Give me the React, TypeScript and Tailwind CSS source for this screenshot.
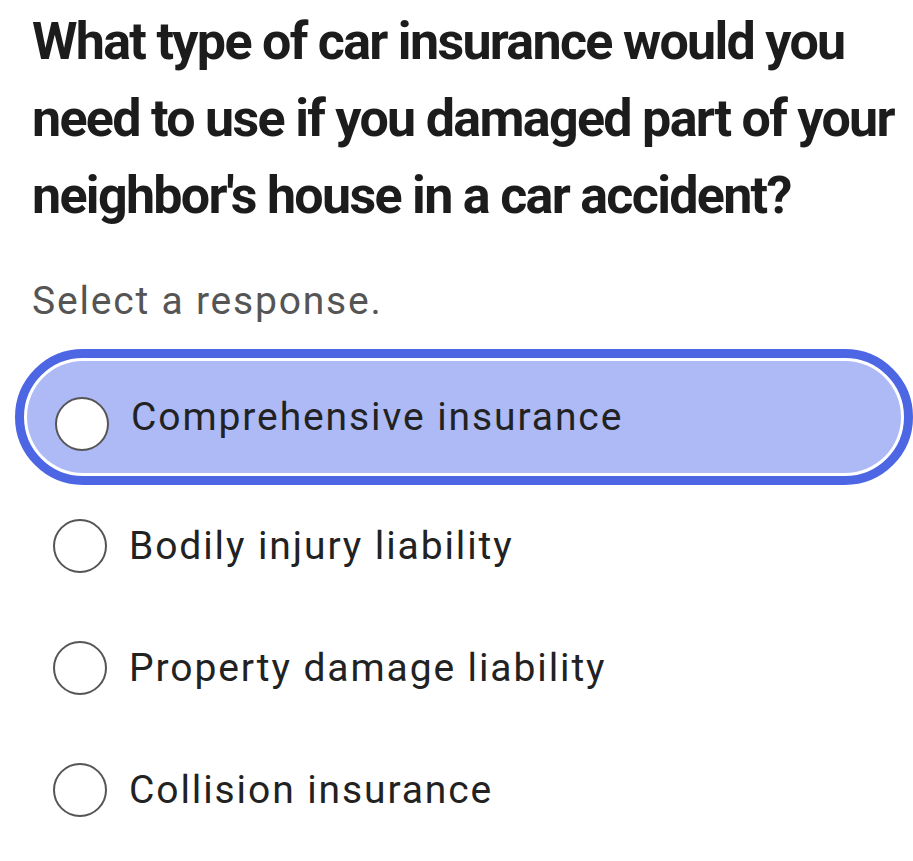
const options = [
  "Comprehensive insurance",
  "Bodily injury liability",
  "Property damage liability",
  "Collision insurance",
];

function Radio() {
  return (
    <span className="block w-[54px] h-[54px] shrink-0 rounded-full border-[2.5px] border-[#555] bg-white" />
  );
}

export default function App() {
  return (
    <div
      className="min-h-[861px] w-[913px] overflow-hidden bg-white text-[#1f1f1f]"
      style={{ fontFamily: "Roboto, 'Noto Sans', sans-serif" }}
    >
      <h1 className="px-[32px] pt-[3px] whitespace-nowrap text-[52px] font-bold leading-[77px] tracking-[-1.7px] text-[#1c1c1c]">
        What type of car insurance would you
        <br />
        need to use if you damaged part of your
        <br />
        neighbor's house in a car accident?
      </h1>
      <p className="px-[32px] mt-[43px] text-[39px] leading-[48px] tracking-[1.8px] text-[#555]">Select a response.</p>

      <div className="mt-[24px] flex flex-col">
        {options.map((opt, i) =>
          i === 0 ? (
            <div
              key={opt}
              className="ml-[15px] w-[898px] h-[136px] rounded-full border-[9px] border-[#4d66e3] p-[3px]"
            >
              <div className="flex h-full items-center gap-[22px] rounded-full bg-[#adbaf5] pl-[28px]">
                <div className="mt-[14px]">
                  <Radio />
                </div>
                <span className="text-[39px] leading-[48px] tracking-[1.9px] text-[#222]">{opt}</span>
              </div>
            </div>
          ) : (
            <div key={opt} className="flex h-[122px] items-center gap-[22px] pl-[53px]">
              <Radio />
              <span className="text-[39px] leading-[48px] tracking-[1.9px] text-[#222]">{opt}</span>
            </div>
          )
        )}
      </div>
    </div>
  );
}
